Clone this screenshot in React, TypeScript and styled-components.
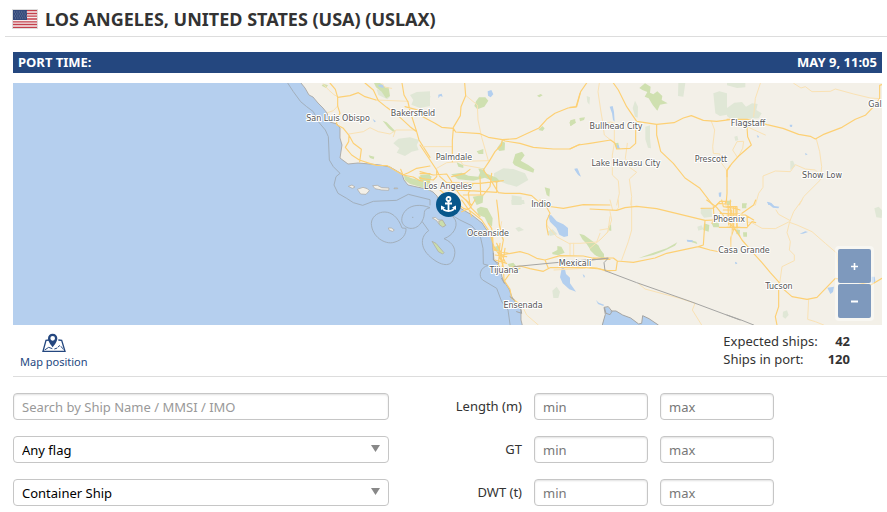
import React from "react";
import styled, { createGlobalStyle } from "styled-components";

const GlobalStyle = createGlobalStyle`
  * { box-sizing: border-box; }
  body {
    margin: 0;
    background: #fff;
    color: #333;
    font: 14px/18px "Noto Sans", "Open Sans", sans-serif;
  }
`;

const Page = styled.main`
  padding-left: 5px;
`;

const Header = styled.header`
  display: flex;
  align-items: center;
  gap: 7px;
  padding: 2px 7px 0;
  height: 37px;
  border-bottom: 1px solid #ddd;
`;

const Title = styled.h1`
  margin: 0;
  font-size: 18px;
  line-height: 34px;
  font-weight: 700;
`;

const Content = styled.div`
  padding: 15px 0 0 8px;
`;

const TimeBar = styled.div`
  display: flex;
  justify-content: space-between;
  margin: 0 5px 10px 0;
  padding: 0 5px;
  background: #24477f;
  color: #fff;
  font-size: 13px;
  line-height: 21px;
  font-weight: 700;
`;

const MapFrame = styled.section`
  position: relative;
  margin-right: 5px;
  height: 242px;
  overflow: hidden;
`;

const MapDrawing = styled.svg`
  display: block;
  width: 100%;
  height: 100%;
`;

const MapLabel = styled.text`
  font-family: "DejaVu Sans", sans-serif;
  font-size: 8px;
  fill: #555;
  stroke: #fff;
  stroke-width: 2px;
  stroke-linejoin: round;
  paint-order: stroke;
  text-anchor: middle;
`;

const ZoomControl = styled.div`
  position: absolute;
  right: 8px;
  bottom: 4px;
  display: grid;
  gap: 1px;
  padding: 3px;
  border-radius: 4px;
  background: rgba(255, 255, 255, 0.45);
`;

const ZoomButton = styled.button`
  display: grid;
  place-items: center;
  width: 33px;
  height: 34px;
  padding: 0;
  border: 0;
  border-radius: 2px;
  background: #7e99bd;
  color: #fff;
  cursor: pointer;
`;

const InfoRow = styled.div`
  display: flex;
  justify-content: space-between;
  height: 52px;
  padding: 7px 37px 0 7px;
  border-bottom: 1px solid #ddd;
`;

const PositionButton = styled.button`
  display: flex;
  flex-direction: column;
  align-items: center;
  align-self: flex-start;
  padding: 1px 0 0;
  border: 0;
  background: none;
  color: #24477f;
  font: 11px/18px "Noto Sans", "Open Sans", sans-serif;
  cursor: pointer;
`;

const Stats = styled.dl`
  display: grid;
  grid-template-columns: auto auto;
  align-content: start;
  column-gap: 10px;
  margin: 0;
  font-size: 13px;
  line-height: 18px;
`;

const StatName = styled.dt``;

const StatValue = styled.dd`
  margin: 0;
  text-align: right;
  font-weight: 700;
`;

const Filters = styled.form`
  display: grid;
  grid-template-columns:
    minmax(0, 376fr) minmax(0, 121fr) minmax(0, 114fr)
    minmax(0, 114fr) minmax(0, 96fr);
  gap: 16px 12px;
  margin: 16px 5px 0 0;
`;

const Field = styled.input<{ $range?: boolean }>`
  grid-column: ${(p) => (p.$range ? "auto" : "1")};
  width: 100%;
  height: 27px;
  padding: 0 8px;
  border: 1px solid #c6c6c6;
  border-radius: 4px;
  background: #fff;
  box-shadow: inset 0 1px 2px rgba(0, 0, 0, 0.12);
  font: 13px/18px "Noto Sans", "Open Sans", sans-serif;
  &::placeholder {
    color: ${(p) => (p.$range ? "#777" : "#999")};
    opacity: 1;
  }
`;

const SelectWrap = styled.div`
  position: relative;
  grid-column: 1;
`;

const Select = styled.select`
  appearance: none;
  display: block;
  width: 100%;
  height: 27px;
  padding: 0 28px 0 8px;
  border: 1px solid #c6c6c6;
  border-radius: 4px;
  background: #fff;
  color: #000;
  font: 13px/18px "Noto Sans", "Open Sans", sans-serif;
`;

const SelectArrow = styled.svg`
  position: absolute;
  top: 9px;
  right: 9px;
  pointer-events: none;
`;

const RangeLabel = styled.label`
  text-align: right;
  font-size: 13px;
  line-height: 27px;
`;

type Shapes = {
  x: number;
  y: number;
  parks?: string[];
  hills?: string[];
  lakes?: string[];
  minor?: string[];
  major?: string[];
  border?: string[];
};

const sectors: Shapes[] = [
  {
    x: 270,
    y: 80,
    hills: [
      "M370 190L385 176 420 172 448 180 440 195 446 210 425 215 405 228 380 218 388 205Z",
      "M420 45L440 36 480 34 480 78 450 84 424 74 430 60Z",
      "M320 28L335 30 360 50 352 58 325 45Z",
    ],
    parks: [
      "M312 9L330 9 345 20 356 22 360 48 348 55 335 35 318 22Z",
      "M338 122L350 127 375 152 374 159 356 145Z",
      "M160 11L174 16 168 24 155 17Z",
      "M296 226L313 230 311 238 300 234Z",
      "M402 285L425 295 450 301 445 290 480 282 480 332 450 320 420 312 404 300Z",
    ],
    lakes: ["M324 14L342 14 340 24 327 20Z", "M308 117L318 124 313 127Z"],
    minor: [
      "M172 98L190 92 203 78",
      "M237 162L280 155 300 143 325 155 360 162 378 150 436 150",
      "M335 9L345 22 365 25",
      "M370 170L376 152",
      "M160 12L176 30 192 44 203 50",
      "M318 60L415 64",
    ],
    major: [
      "M180 9L196 28 203 52 203 78 210 100 200 118 200 134 220 145 237 166 236 185 226 202 245 225 268 240 301 251 320 256 352 257 373 270 399 285 415 278 440 265 480 258",
      "M237 166L250 190 274 208 269 246",
      "M203 52L240 47 265 38 285 50 318 60",
      "M285 9L310 30 325 62 350 82 390 112 420 140 440 155 447 180 480 232",
      "M396 9L402 45 414 66 420 93 440 155",
      "M405 80L450 92 480 105",
      "M399 285L430 291 450 302 480 306M450 281L480 281M450 293L480 293M399 285L392 268",
    ],
  },
  {
    x: 420,
    y: 80,
    hills: [
      "M222 280L250 265 280 267 315 280 325 300 290 320 260 312 240 304 222 292Z",
      "M0 40L22 40 32 50 10 80 0 82Z",
      "M275 346L305 350 305 375 275 375Z",
    ],
    parks: [
      "M168 64L177 52 196 52 205 62 193 80 172 88 163 78Z",
      "M278 248L286 222 306 215 314 226 302 242 325 255 343 268 340 278 310 268 284 256Z",
      "M231 205L246 183 255 188 254 211 238 213Z",
      "M355 150L367 138 374 145 368 153Z",
      "M448 128L453 120 466 118 464 130 453 138Z",
      "M351 47L362 42 368 46 358 52Z",
      "M93 283L125 278 145 287 175 290 180 278 175 266 192 265 197 280 230 293 240 304 230 309 195 293 160 302 115 298Z",
      "M170 214L190 207 190 222 176 222Z",
      "M374 322L390 326 388 350 380 345Z",
      "M0 285L25 283 35 290 30 304 10 304Z",
      "M158 350L190 345 188 368 170 375Z",
      "M110 247L130 256 130 264 115 260Z",
    ],
    lakes: [
      "M203 34L214 30 220 43 212 52 204 47Z",
      "M55 44L65 41 68 50 60 48 55 55Z",
      "M463 268L474 270 480 289 473 283Z",
    ],
    minor: [
      "M138 47L172 75 174 120 185 172 205 242",
      "M10 200L95 200",
      "M50 265L80 248 130 244 205 242",
      "M110 230L130 255 180 264 190 270",
    ],
    major: [
      "M134 9L137 47 123 80 121 107 100 142",
      "M0 106L45 130 65 142 100 145 107 156 180 161 205 172 247 179 288 176 310 166 357 144 380 118 405 100 444 84 468 81 480 40",
      "M100 145L97 182 97 245",
      "M247 179L255 183 300 190 340 202 400 207 450 207 480 193",
      "M247 179L244 195 225 215 207 245 190 270 212 300 235 338 255 340 300 340 335 347 358 367 375 375",
      "M0 195L20 225 50 270 60 290 80 308 150 310 180 310 250 302",
      "M0 275L40 285 80 282 95 305",
      "M50 270L50 290 40 300M0 295L40 300",
      "M85 330L150 332 230 337M180 290L182 345M160 310L145 340 150 375M215 280L210 320 190 345 130 345M230 305L230 335M95 310L120 345 155 375",
      "M95 290L135 280 150 268M60 330L90 355 110 375",
    ],
  },
  {
    x: 570,
    y: 80,
    hills: [
      "M226 140L240 136 240 175 243 205 234 203 226 178Z",
      "M188 84L195 62 204 80 203 113 195 110Z",
      "M325 9L346 9 340 50 324 48Z",
      "M430 40L448 34 471 40 471 104 450 108 436 100Z",
      "M50 48L60 52 58 74 52 66Z",
    ],
    parks: [
      "M208 24L225 10 242 20 240 38 250 43 262 34 277 48 275 60 293 70 270 74 262 92 248 75 236 55 224 50 232 36 217 30Z",
      "M0 122L14 118 18 128 0 138Z",
      "M28 114L45 112 42 120 30 124Z",
      "M132 190L145 188 148 206 140 206Z",
    ],
    lakes: [
      "M119 80L128 78 132 95 134 125 129 120 126 100Z",
      "M13 266L22 265 33 290 26 286Z",
      "M140 194L146 196 150 208 142 205Z",
      "M446 338L454 337 453 350 447 350Z",
    ],
    minor: [
      "M133 130L133 190 127 225 127 285 145 302 148 340 140 375",
      "M172 190L166 235 180 263 200 277 178 297 185 350 182 375",
      "M133 130L122 126 110 130",
      "M88 9L84 35 92 90 97 120 103 165 122 180",
      "M424 124L434 150 428 200 430 220 450 222 455 250 471 272",
    ],
    major: [
      "M50 9L32 35 20 80 0 82",
      "M130 9L145 30 170 80 200 124 240 130 260 133 312 128 340 114 364 107 400 121 440 124 480 119",
      "M197 130L197 190 180 205 140 207 135 190 122 180 60 190 25 195 0 206",
      "M260 133L260 165 272 214 310 250 345 294 390 325 428 375",
      "M480 258L471 272 471 340 468 375M440 375L450 364 480 364",
    ],
  },
  {
    x: 727,
    y: 80,
    hills: [
      "M0 84L22 68 45 66 57 80 75 70 92 72 88 90 104 100 95 115 40 118 10 116 0 108Z",
      "M190 243L198 242 205 258 190 270Z",
      "M0 9L55 9 55 22 30 24 0 16Z",
      "M22 170L31 167 34 180 25 183Z",
    ],
    parks: ["M0 364L14 362 8 375 0 375Z", "M45 370L60 370 58 375 45 375Z"],
    lakes: [
      "M188 134L196 134 195 141 189 140Z",
      "M89 165L96 169 93 175Z",
      "M234 219L242 223 236 226Z",
      "M120 365L132 369 135 375 124 375Z",
    ],
    minor: [
      "M100 10L85 55 80 110",
      "M268 177L278 215 284 260 280 300 230 350 217 375",
      "M200 10L222 24 235 20 255 35 310 34 325 27 380 42 430 54 458 56",
      "M85 375L95 340 108 322 108 288 145 273 190 275 205 254 235 267 265 270 285 290",
      "M60 140L115 165",
      "M30 230L17 210 30 185 50 184 47 205 35 228",
    ],
    major: [
      "M0 118L60 118 120 134 168 145 215 163 250 169 265 177 288 164 345 142 385 118 415 106 440 80 458 56 458 16 464 14",
      "M60 140L62 170 73 195 35 228 15 250 0 270 0 290",
    ],
  },
  {
    x: 450,
    y: 200,
    hills: [
      "M184 0L222 0 224 12 185 12Z",
      "M307 272L320 260 330 275 325 294 310 294Z",
      "M196 85L208 80 222 90 205 95Z",
      "M292 94L308 88 322 103 300 108Z",
    ],
    parks: [
      "M388 101L402 105 430 125 445 136 465 175 440 168 422 150 410 132 397 118Z",
      "M306 158L322 150 322 138 334 140 344 158 325 166 308 163Z",
      "M80 27L92 20 112 25 128 55 126 80 112 68 104 52 85 45Z",
      "M135 140L148 136 150 152 138 155Z",
      "M173 192L190 188 200 200 178 202Z",
    ],
    lakes: [
      "M294 45L304 46 320 64 340 73 354 84 354 108 342 111 328 104 319 84 300 65Z",
      "M336 200L345 208 348 222 360 233 360 250 378 275 358 268 338 250 330 232Z",
      "M398 222L405 228 402 234Z",
    ],
    minor: [
      "M155 65L148 100 160 120",
      "M312 210L405 205",
      "M360 130L360 165M371 130L371 165M360 130L390 130 440 126 450 100",
      "M290 75L320 110 360 132",
      "M218 320L230 345 265 375",
      "M450 90L480 85M480 50L474 95 450 120",
    ],
    major: [
      "M270 0L288 18 340 25 400 14 480 15",
      "M288 18L300 40 290 62 290 80 295 105",
      "M128 110L130 145 155 165 210 155 235 162 260 175 285 180 330 167 400 168 440 177 480 178",
      "M140 0L145 40 148 75 160 120 152 165 162 210",
      "M165 205L210 198 240 206 280 214 300 203 330 203 400 202 450 207 480 213",
      "M35 0L55 28 95 60 118 95 132 140 145 160 160 200 162 240 180 268 185 295 206 310",
      "M10 0L40 25 58 30 65 50M48 0L65 25 90 50M75 0L60 24 35 35",
      "M130 150L175 160M135 165L170 170M150 130L145 200M165 145L155 210M135 180L170 190M140 130L165 185M162 245L180 220 210 205",
      "M115 70L125 85 128 115M285 180L295 205",
    ],
    border: [
      "M192 200L285 191 360 184 472 175",
      "M130 160L130 180 145 190M155 235L163 250M180 290L193 300M200 335L215 340 212 325",
    ],
  },
  {
    x: 590,
    y: 200,
    hills: ["M333 24L365 24 366 50 342 53 332 40Z", "M322 80L335 76 340 88 325 92Z"],
    parks: [
      "M0 130L15 130 42 162 42 177 15 165 0 150Z",
      "M145 175L190 158 230 145 262 127 255 137 222 153 190 165Z",
      "M365 70L386 68 388 82 370 82Z",
      "M342 70L358 75 356 95 340 90Z",
      "M55 80L63 72 64 92 58 92Z",
      "M303 121L319 125 322 132 306 127Z",
    ],
    lakes: [
      "M290 119L308 121 308 127 292 125Z",
      "M36 375L46 343 42 322 55 322 63 333 78 333 98 345 122 354 146 372 155 370 158 347 177 356 205 375Z",
      "M435 185L442 190 437 193Z",
      "M18 300L26 308 42 314 40 318 24 312Z",
    ],
    minor: [
      "M60 35L65 60 52 98 35 115 0 145",
      "M125 0L125 90 115 125 95 180",
      "M145 250L165 267 270 295 315 310 307 330 335 375",
      "M60 0L68 30M85 0L86 22 80 30",
    ],
    major: [
      "M0 27L80 31 105 23 140 19 200 26 345 61 375 60",
      "M345 61L340 135 325 140 230 160 195 174 130 187 82 183 70 174 10 174",
      "M325 140L360 150 390 156",
      "M0 203L20 204 45 212 78 211 82 183",
      "M350 0L380 22 415 65 450 108",
      "M333 25L370 24 385 10 405 12 410 0M370 20L372 50 366 70 370 58M395 0L400 20 435 25 450 30M400 30L425 30 427 90M390 40L450 42M388 82L450 82M414 12L416 75M437 20L441 80",
      "M432 84L422 115 422 145",
    ],
    border: [
      "M0 181L55 174 42 188 45 212 140 248 300 304 450 360",
      "M37 375L46 343 42 322 55 320 66 334 60 344 48 340 44 325M63 333L78 333 98 345 122 354 146 372 155 370 158 347 177 356 205 375",
    ],
  },
  {
    x: 727,
    y: 200,
    hills: ["M442 25L455 20 466 32 464 54 448 52Z", "M168 335L180 331 185 345 175 356 167 350Z"],
    parks: ["M45 13L58 13 58 25 45 25Z", "M48 97L60 97 60 110 49 110Z", "M28 88L39 90 38 104 28 102Z"],
    lakes: [
      "M120 6L133 9 142 18 157 20 154 25 138 23 128 15Z",
      "M218 101L235 94 243 96 228 101Z",
      "M301 263L321 260 318 276 310 282Z",
      "M434 230L443 230 445 243 440 252 434 248Z",
      "M24 186L31 189 27 193Z",
    ],
    minor: [
      "M225 0L200 35 188 65 180 98 190 125 187 150 202 165 202 182 165 200 158 250",
      "M60 66L75 68 105 85 145 86 185 66 210 75 255 95 295 130 330 160 335 235",
      "M190 62L155 43 147 30",
      "M245 298L242 358 265 365 290 375",
      "M15 90L12 120 10 150",
    ],
    major: [
      "M15 50L20 80 45 120 75 155 105 188 130 218 157 248 170 268 195 290 240 298 270 292 325 235 385 245 430 256 465 235",
      "M155 250L155 320 145 350 150 375",
      "M0 20L30 20 30 85M0 45L55 45 80 60M0 82L60 83M60 50L62 80 75 65 86 68M45 40L80 15 86 0M10 0L10 80M20 20L20 80",
    ],
    border: ["M0 345L45 361 80 375"],
  },
];

const places: [string, number, number][] = [
  ["San Luis Obispo", 338, 121],
  ["Bakersfield", 413, 116],
  ["Palmdale", 454, 160],
  ["Los Angeles", 448, 189],
  ["Indio", 541, 207],
  ["Oceanside", 488, 236],
  ["Tijuana", 504, 273],
  ["Mexicali", 575, 266],
  ["Ensenada", 523, 308],
  ["Bullhead City", 616, 129],
  ["Lake Havasu City", 626, 166],
  ["Flagstaff", 748, 126],
  ["Prescott", 711, 162],
  ["Show Low", 822, 178],
  ["Phoenix", 729, 222],
  ["Casa Grande", 744, 253],
  ["Tucson", 779, 289],
  ["Gal", 875, 107],
];

const COAST =
  "M298 80L301 83 305 88 309 95 313 97 318 103 323 108 327 113 330 122 337 124 340 128 340 138 342 145 340 158 348 164 358 163 370 164 380 165 390 167 402 174 404 180 408 185 417 187 427 189 433 192 437 196 440 203 447 206 460 208 472 215 482 223 488 232 492 238 493 250 494 260 500 267 502 277 505 283 509 289 512 297 516 303 521 310 521 320 523 328H1400V80Z";

const paint = (
  paths: string[] | undefined,
  fill: string,
  stroke = "none",
  width = 0
) => <path d={(paths || []).join("")} fill={fill} stroke={stroke} strokeWidth={width} />;

function RegionMap() {
  return (
    <MapDrawing
      viewBox="13 83 869 242"
      preserveAspectRatio="xMidYMid slice"
      role="img"
      aria-label="Map of the port area"
    >
      <rect x="-500" y="80" width="1900" height="250" fill="#b5cfee" />
      <path d={COAST} fill="#f3f0e8" stroke="#a5a19c" strokeWidth="0.8" />
      {sectors.map((s) => (
        <svg
          key={`${s.x}-${s.y}`}
          x={s.x}
          y={s.y}
          width="160"
          height="125"
          viewBox="0 0 480 375"
          overflow="visible"
          strokeLinejoin="round"
          strokeLinecap="round"
        >
          {paint(s.hills, "#e0e7d6")}
          {paint(s.parks, "#cfe0b0")}
          {paint(s.lakes, "#b3cfef")}
          {paint(s.minor, "none", "#fae2b4", 3)}
          {paint(s.major, "none", "#fdd074", 3.5)}
          {paint(s.border, "none", "#a5a5a3", 3)}
        </svg>
      ))}
      <svg x="330" y="160" width="160" height="110" viewBox="0 0 480 330" overflow="visible">
        <g fill="#f3f0e8" stroke="#aaa69f" strokeWidth="2" strokeLinejoin="round">
          <path d="M55 79L66 75 75 81 67 85ZM82 88L99 82 112 86 118 92 108 103 92 102ZM128 77L142 76 155 83 177 84 176 91 155 90 145 88 135 86ZM192 84L203 84 203 86 192 86ZM175 204L184 204 193 210 188 214 178 211ZM307 174L317 172 325 180 337 180 347 196 340 200 326 191 320 182Z" />
          <path
            d="M326 184L337 180 347 196 338 201 328 194ZM306 244L318 250 342 278 338 282 325 275Z"
            fill="#cbdeaa"
          />
        </g>
        <g fill="none" stroke="#a2afbc" strokeWidth="3" strokeLinejoin="round">
          <path d="M-127 -231L-110 -205 -88 -175 -70 -160 -50 -145 -35 -115 -14 -90 -5 -70 -2 0 10 20 30 40 18 50 12 75 24 100 50 115 70 128 98 136 130 124 200 121 235 103 300 119V136" />
          <path d="M216 204C190 130 125 155 124 190C125 230 165 255 192 247C220 240 229 220 228 205Z" />
          <path d="M300 143C240 120 210 160 216 186C225 210 260 214 276 184C290 160 273 150 300 143" />
          <path d="M276 184L296 212C270 230 272 262 295 285C325 315 360 325 370 298C382 270 370 248 342 236C370 226 384 200 376 180L366 166" />
          <path d="M366 166L390 180 425 197 450 225 459 265 460 312 475 316" />
          <path d="M475 316C450 322 444 348 458 360L500 385 515 425 534 450 541 500" />
          <path d="M246 172L250 172" />
        </g>
      </svg>
      {places.map(([name, x, y]) => (
        <MapLabel key={name} x={x} y={y}>
          {name}
        </MapLabel>
      ))}
      <circle cx="448.500" cy="204.500" r="12.500" fill="#07578b" />
      <svg x="440" y="196" width="17" height="17" viewBox="0 0 17 17">
        <g fill="none" stroke="#fff" strokeWidth="1.800">
          <circle cx="8.500" cy="3" r="2" />
          <path d="M8.500 5V15M5 7.500H12M2 11C3 14 6 15 8.500 15S14 14 15 11" />
        </g>
        <path d="M1 9.500L5 11.500 1 14ZM16 9.500L12 11.500 16 14Z" fill="#fff" />
      </svg>
    </MapDrawing>
  );
}

function UsFlag() {
  return (
    <svg width="26" height="20" viewBox="0 0 26 20" role="img" aria-label="United States">
      <rect width="26" height="20" fill="#ddd" />
      <rect x="1" y="1" width="24" height="18" fill="#f5eeee" />
      <path
        d="M1 1.700H25M1 4.500H25M1 7.200H25M1 10H25M1 12.800H25M1 15.500H25M1 18.300H25"
        stroke="#c4404c"
        strokeWidth="1.300"
      />
      <rect x="1" y="1" width="14" height="10" fill="#354a7b" />
      <path
        d="M2 3H15M3 5H15M2 7H15M3 9H15"
        stroke="#8492b0"
        strokeWidth="0.800"
        strokeDasharray="1 1.400"
      />
    </svg>
  );
}

function PositionIcon() {
  return (
    <svg width="24" height="20" viewBox="0 0 72 60" aria-hidden="true">
      <g fill="none" stroke="#24477f" strokeWidth="4">
        <path d="M22 21L12 22 3 55H69L59 22 49 21" />
        <path d="M8 51L20 43 31 47" strokeWidth="3" />
        <path d="M37 48L46 45 52 38 57 40 65 51" strokeWidth="3" strokeDasharray="9 3" />
      </g>
      <path
        d="M32 2C24 2 18 8 18 16C18 27 32 43 32 43S46 27 46 16C46 8 40 2 32 2ZM32 9A7 7 0 1 1 32 23A7 7 0 0 1 32 9Z"
        fill="#24477f"
        fillRule="evenodd"
      />
    </svg>
  );
}

function FilterSelect({ label, options }: { label: string; options: string[] }) {
  return (
    <SelectWrap>
      <Select aria-label={label}>
        {options.map((o) => (
          <option key={o}>{o}</option>
        ))}
      </Select>
      <SelectArrow width="9" height="7" viewBox="0 0 9 7" aria-hidden="true">
        <path d="M0 0H9L4.500 7Z" fill="#888" />
      </SelectArrow>
    </SelectWrap>
  );
}

function RangeFilter({ id, label }: { id: string; label: string }) {
  return (
    <>
      <RangeLabel htmlFor={`${id}-min`}>{label}</RangeLabel>
      <Field $range id={`${id}-min`} placeholder="min" />
      <Field $range aria-label={`${label} max`} placeholder="max" />
    </>
  );
}

export default function App() {
  return (
    <Page>
      <GlobalStyle />
      <Header>
        <UsFlag />
        <Title>LOS ANGELES, UNITED STATES (USA) (USLAX)</Title>
      </Header>
      <Content>
        <TimeBar>
          <span>PORT TIME:</span>
          <time>MAY 9, 11:05</time>
        </TimeBar>
        <MapFrame>
          <RegionMap />
          <ZoomControl>
            <ZoomButton type="button" aria-label="Zoom in">
              <svg width="9" height="9" viewBox="0 0 9 9">
                <path d="M1 4.500H8M4.500 1V8" stroke="#fff" strokeWidth="1.600" />
              </svg>
            </ZoomButton>
            <ZoomButton type="button" aria-label="Zoom out">
              <svg width="9" height="9" viewBox="0 0 9 9">
                <path d="M1 4.500H8" stroke="#fff" strokeWidth="2" />
              </svg>
            </ZoomButton>
          </ZoomControl>
        </MapFrame>
        <InfoRow>
          <PositionButton type="button">
            <PositionIcon />
            Map position
          </PositionButton>
          <Stats>
            <StatName>Expected ships:</StatName>
            <StatValue>42</StatValue>
            <StatName>Ships in port:</StatName>
            <StatValue>120</StatValue>
          </Stats>
        </InfoRow>
        <Filters>
          <Field
            aria-label="Search by Ship Name / MMSI / IMO"
            placeholder="Search by Ship Name / MMSI / IMO"
          />
          <RangeFilter id="length" label="Length (m)" />
          <FilterSelect label="Flag" options={["Any flag"]} />
          <RangeFilter id="gt" label="GT" />
          <FilterSelect label="Ship type" options={["Container Ship"]} />
          <RangeFilter id="dwt" label="DWT (t)" />
        </Filters>
      </Content>
    </Page>
  );
}
